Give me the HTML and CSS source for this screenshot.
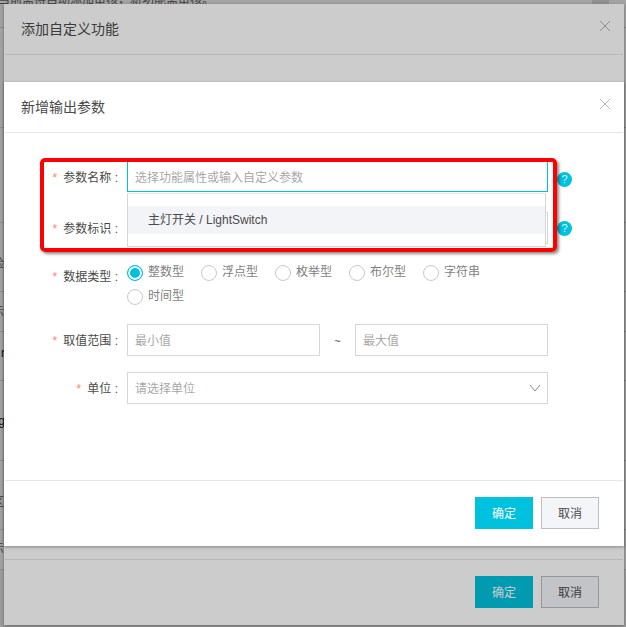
FILE: index.html
```html
<!DOCTYPE html>
<html lang="zh-CN">
<head>
<meta charset="utf-8">
<title>新增输出参数</title>
<link rel="stylesheet" href="styles.css">
</head>
<body>
<div class="stage">
  <div class="page" aria-hidden="true">
    <div class="page-row r1"><span class="top-note">当前需待自动添加审核，新功能需审核。</span><span class="top-tab"></span></div>
    <div class="page-row r2"></div>
    <div class="page-row r3"></div>
    <div class="page-row r4"><span class="frag">验</span></div>
    <div class="page-row r5"><span class="frag">示</span></div>
    <div class="page-row r6"><span class="frag dark">r</span></div>
    <div class="page-row r7"><span class="frag dark">ig</span></div>
    <div class="page-row r8"><span class="frag">区</span></div>
    <div class="page-row r9"><span class="frag">示</span></div>
    <div class="page-row r10"></div>
  </div>
  <div class="mask"></div>

  <section class="dialog dialog-outer">
    <header class="dialog-head">
      <h2 class="dialog-title">添加自定义功能</h2>
      <svg class="close" viewBox="0 0 12 12"><path d="M1 1l10 10M11 1L1 11"/></svg>
    </header>
    <div class="dialog-body"></div>
    <footer class="dialog-foot">
      <button class="btn btn-primary">确定</button>
      <button class="btn btn-plain">取消</button>
    </footer>
  </section>
  <div class="mask"></div>

  <section class="dialog dialog-inner">
    <header class="dialog-head">
      <h2 class="dialog-title">新增输出参数</h2>
      <svg class="close" viewBox="0 0 12 12"><path d="M1 1l10 10M11 1L1 11"/></svg>
    </header>
    <form class="dialog-body form">
      <div class="row row-first">
        <label class="label"><i>*</i>参数名称 :</label>
        <div class="control combo">
          <div class="input input-focus placeholder">选择功能属性或输入自定义参数</div>
          <div class="dropdown"><div class="option">主灯开关 / LightSwitch</div></div>
        </div>
        <span class="help">?</span>
      </div>
      <div class="row">
        <label class="label"><i>*</i>参数标识 :</label>
        <div class="control"><div class="input"></div></div>
        <span class="help help-low">?</span>
      </div>
      <div class="row">
        <label class="label"><i>*</i>数据类型 :</label>
        <div class="radios">
          <span class="radio checked"><b></b>整数型</span>
          <span class="radio"><b></b>浮点型</span>
          <span class="radio"><b></b>枚举型</span>
          <span class="radio"><b></b>布尔型</span>
          <span class="radio"><b></b>字符串</span>
          <span class="radio"><b></b>时间型</span>
        </div>
      </div>
      <div class="row">
        <label class="label"><i>*</i>取值范围 :</label>
        <div class="control range">
          <div class="input placeholder">最小值</div>
          <span class="tilde">~</span>
          <div class="input placeholder">最大值</div>
        </div>
      </div>
      <div class="row">
        <label class="label"><i>*</i>单位 :</label>
        <div class="control">
          <div class="input placeholder select">请选择单位
            <svg class="chevron" viewBox="0 0 12 8"><path d="M1 1l5 6 5-6"/></svg>
          </div>
        </div>
      </div>
    </form>
    <footer class="dialog-foot">
      <button class="btn btn-primary">确定</button>
      <button class="btn btn-plain">取消</button>
    </footer>
  </section>

  <div class="highlight"></div>
</div>
</body>
</html>
```
FILE: styles.css
```css
* { box-sizing: border-box; }
html, body { margin: 0; height: 100%; }
body {
  font-family: "Liberation Sans", "Noto Sans CJK SC", sans-serif;
  font-size: 12px;
  color: #4a4a4a;
  background: #fff;
  overflow: hidden;
}
.stage { position: relative; width: 626px; height: 627px; overflow: hidden; background: #fff; }

/* page behind the dialogs */
.page { height: 100%; overflow: hidden; }
.page-row { display: flex; align-items: center; border-bottom: 1px solid #dcdcdc; color: #777; font-size: 12px; overflow: hidden; }
.r1 { height: 28px; align-items: flex-start; }
.r2 { height: 100px; }
.r3 { height: 95px; }
.r4 { height: 69px; padding-top: 10px; }
.r5 { height: 40px; padding-bottom: 2px; }
.r6 { height: 49px; padding-bottom: 6px; }
.r7 { height: 80px; }
.r8 { height: 69px; padding-top: 10px; }
.r9 { height: 40px; padding-bottom: 4px; }
.r10 { height: 57px; border-bottom: 0; background: #f4f4f4; }
.top-note { margin: -6px 0 0 -2px; line-height: 12px; font-size: 12px; color: #666; white-space: nowrap; }
.top-tab { width: 17px; height: 4px; margin: 0 17px 0 auto; background: #e2e2e2; }
.frag { margin-left: -8px; width: 12px; text-align: right; white-space: nowrap; }
.frag.dark { color: #222; margin-left: -7px; }

.mask { position: absolute; inset: 0; background: rgba(0, 0, 0, .2); }

/* dialogs */
.dialog {
  position: absolute;
  left: 4px;
  width: 620px;
  display: flex;
  flex-direction: column;
  background: #fff;
  padding: 0 1px;
  box-shadow: 0 1px 3px rgba(0, 0, 0, .35);
}
.dialog-outer { top: 4px; height: 621px; }
.dialog-inner { top: 82px; height: 464px; }

.dialog-head {
  height: 51px;
  flex: none;
  display: flex;
  justify-content: space-between;
  padding: 0 12px 0 16px;
  border-bottom: 1px solid #e6e6e6;
}
.dialog-title { margin: 0; font-size: 14px; font-weight: 400; line-height: 50px; color: #4a4a4a; }
.close { width: 12px; height: 12px; margin-top: 16px; }
.close path { fill: none; stroke: #b4b4b4; stroke-width: 1; }

.dialog-body { flex: 1; min-height: 0; }
.dialog-foot {
  height: 66px;
  flex: none;
  display: flex;
  justify-content: flex-end;
  gap: 8px;
  padding: 16px 24px 0 0;
  border-top: 1px solid #e6e6e6;
}
.btn {
  width: 58px;
  height: 32px;
  padding: 0 0 2px;
  font: inherit;
  border: 1px solid transparent;
}
.btn-primary { background: #00c1de; color: #fff; }
.btn-plain { background: #f4f5f9; border: 1px solid #bfbfbf; color: #4a4a4a; }

/* form */
.form { padding: 27px 0 0; }
.row { display: flex; margin-bottom: 16px; }
.row-first { margin-bottom: 20px; }
.label { width: 113px; flex: none; margin-right: 9px; height: 32px; line-height: 33px; text-align: right; white-space: nowrap; color: #4a4a4a; }
.row-first .label { line-height: 35px; }
.label i { font-style: normal; color: #ff8a7a; margin-right: 6px; font-family: "Liberation Sans", sans-serif; font-size: 13px; }
.control { width: 421px; flex: none; }
.input { height: 32px; line-height: 29px; padding: 2px 7px 0; border: 1px solid #d7d7d7; background: #fff; }
.input.input-focus { border-color: #00c1de; padding-top: 3px; }
.placeholder { color: #a8a8a8; }

.combo { position: relative; }
.dropdown {
  position: absolute;
  z-index: 2;
  top: 33px;
  left: 0;
  width: 419px;
  height: 54px;
  padding-top: 12px;
  background: #fff;
  border: 1px solid #d7d7d7;
  border-top-color: #e8e8e8;
}
.option { height: 28px; line-height: 28px; padding-left: 20px; background: #f3f4f8; color: #4a4a4a; }

.help {
  width: 15px;
  height: 15px;
  flex: none;
  margin: 11.5px 0 0 9px;
  border-radius: 50%;
  background: #00c1de;
  color: #d6f5fa;
  font-size: 11px;
  line-height: 15px;
  text-align: center;
}
.help-low { margin-top: 8.5px; }

.radios { width: 421px; display: grid; grid-template-columns: repeat(5, 74px); row-gap: 8px; padding-top: 5px; height: 48px; align-content: start; }
.radio { display: flex; align-items: flex-start; gap: 5px; height: 16px; line-height: 14px; color: #7f7f7f; white-space: nowrap; }
.radio b { width: 16px; height: 16px; flex: none; border: 1px solid #c9c9c9; border-radius: 50%; background: #fff; }
.radio.checked b { border-color: #00c1de; background: #00c1de; box-shadow: inset 0 0 0 2px #fff; }

.range { display: flex; align-items: center; }
.range .input { width: 193px; flex: none; }
.tilde { width: 35px; text-align: center; color: #4a4a4a; font-size: 11px; padding-top: 2px; }

.select { display: flex; justify-content: space-between; align-items: center; padding-right: 6px; }
.chevron { width: 12px; height: 8px; margin-top: -3px; }
.chevron path { fill: none; stroke: #8c8c8c; stroke-width: 1; }

/* annotation drawn over the screenshot */
.highlight {
  position: absolute;
  left: 40px;
  top: 158px;
  width: 517px;
  height: 94px;
  border: 4px solid #ff0000;
  border-radius: 5px;
  box-shadow: 2px 2px 3px rgba(0, 0, 0, .45);
}
```
